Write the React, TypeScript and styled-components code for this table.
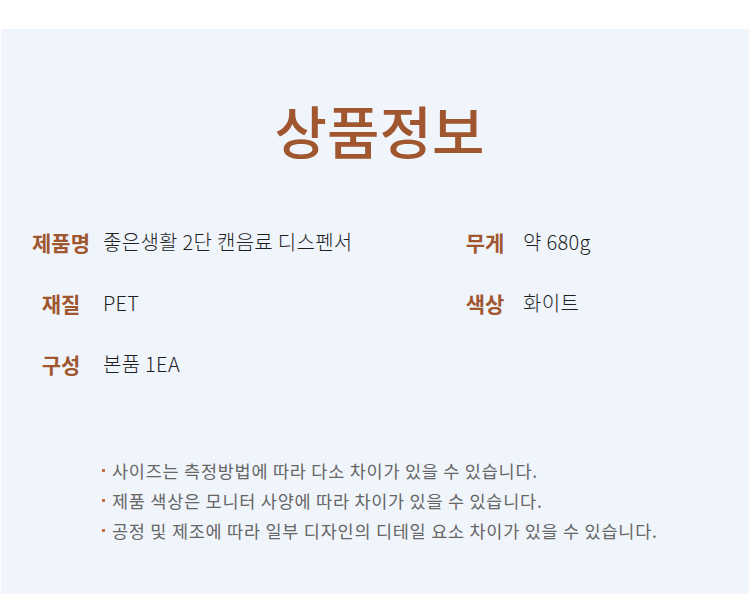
import * as React from "react";
import styled, { createGlobalStyle } from "styled-components";

const GlobalStyle = createGlobalStyle`
    html, body {
        margin: 0;
        padding: 0;
        background: #ffffff;
    }

    body {
        font-family: "Noto Sans CJK KR", "Noto Sans", sans-serif;
    }
`;

type Spec = { label: string; value: string };

const leftSpecs: Spec[] = [
    { label: "제품명", value: "좋은생활 2단 캔음료 디스펜서" },
    { label: "재질", value: "PET" },
    { label: "구성", value: "본품 1EA" },
];

const rightSpecs: Spec[] = [
    { label: "무게", value: "약 680g" },
    { label: "색상", value: "화이트" },
];

const notes = [
    "사이즈는 측정방법에 따라 다소 차이가 있을 수 있습니다.",
    "제품 색상은 모니터 사양에 따라 차이가 있을 수 있습니다.",
    "공정 및 제조에 따라 일부 디자인의 디테일 요소 차이가 있을 수 있습니다.",
];

const SpecList = ({ specs, gap }: { specs: Spec[]; gap: number }) => (
    <Column>
        {specs.map((s) => (
            <SpecRow key={s.label} $gap={gap}>
                <Label>{s.label}</Label>
                <Value>{s.value}</Value>
            </SpecRow>
        ))}
    </Column>
);

export default function App() {
    return (
        <Page>
            <GlobalStyle />
            <Panel>
                <Title>상품정보</Title>
                <SpecGrid>
                    <SpecList specs={leftSpecs} gap={9} />
                    <SpecList specs={rightSpecs} gap={5} />
                </SpecGrid>
                <Notes>
                    {notes.map((n) => (
                        <Note key={n}>{n}</Note>
                    ))}
                </Notes>
            </Panel>
        </Page>
    );
}

const Page = styled.div`
    width: 750px;
    height: 594px;
    padding-top: 29px;
    box-sizing: border-box;
    background: #ffffff;
    overflow: hidden;
`;

const Panel = styled.div`
    margin: 0 1px;
    height: 565px;
    background: #f0f5fc;
    display: flex;
    flex-direction: column;
`;

const Title = styled.h1`
    margin: 72px 0 0;
    padding-left: 9px;
    font-size: 57px;
    line-height: 1;
    font-weight: 500;
    color: #a0572f;
    text-align: center;
    letter-spacing: 0;
`;

const SpecGrid = styled.div`
    margin-top: 53px;
    padding-left: 27px;
    display: grid;
    grid-template-columns: 424px 1fr;
`;

const Column = styled.div`
    display: flex;
    flex-direction: column;
`;

const SpecRow = styled.div<{ $gap: number }>`
    height: 61px;
    display: flex;
    align-items: center;
    gap: ${(p) => p.$gap}px;
`;

const Label = styled.div`
    width: 66px;
    text-align: center;
    font-size: 21px;
    font-weight: 700;
    color: #a0572f;
`;

const Value = styled.div`
    font-size: 20px;
    font-weight: 300;
    letter-spacing: 0.3px;
    color: #1e1e1e;
`;

const Notes = styled.ul`
    list-style: none;
    margin: 61px 0 0;
    padding: 0 0 0 100px;
`;

const Note = styled.li`
    display: flex;
    align-items: center;
    gap: 7px;
    height: 30px;
    font-size: 17.5px;
    letter-spacing: 0.75px;
    color: #666666;

    &::before {
        content: "";
        flex: none;
        width: 3px;
        height: 3px;
        background: #c4713f;
        margin-left: 1px;
    }
`;
